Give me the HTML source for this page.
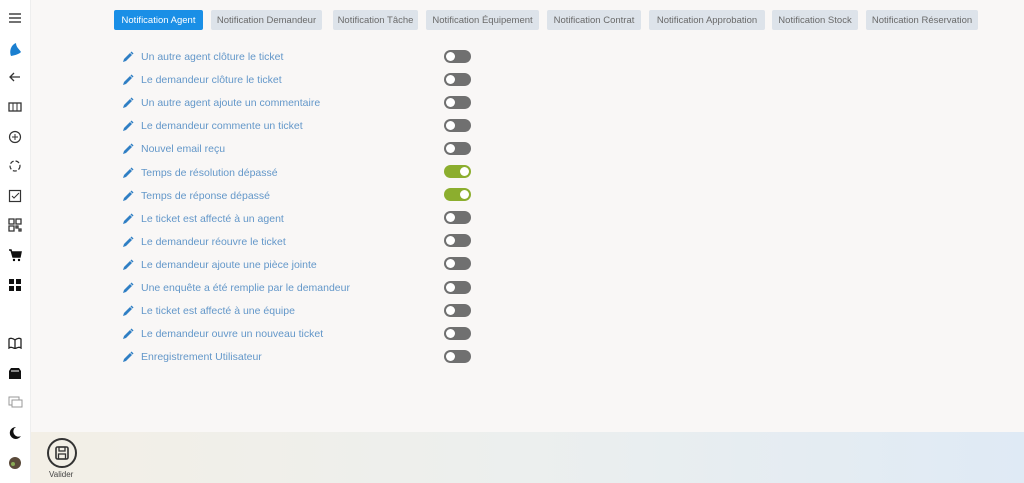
<!DOCTYPE html><html><head><meta charset="utf-8"><style>
*{margin:0;padding:0;box-sizing:border-box}
body{width:1024px;height:483px;overflow:hidden;background:#f9f7f6;font-family:"Liberation Sans",sans-serif;position:relative}
.side{position:absolute;left:0;top:0;width:31px;height:483px;background:#fff;border-right:1px solid #eee}
.side svg{position:absolute;left:8px}
.tab{position:absolute;top:10px;height:20px;background:#dde3ea;color:#6a6a6a;font-size:9.5px;line-height:20px;text-align:center;border-radius:2px;padding-top:1px}
.tab.a{background:#1a8fe6;color:#fff}
.row{position:absolute;left:122px;font-size:10.5px;color:#6397c9;height:14px;line-height:14px}
.row svg{position:absolute;left:0;top:1px}
.row span{position:absolute;left:19px;white-space:nowrap}
.tg{position:absolute;left:444px;width:27px;height:13px;border-radius:7px;background:#707070}
.tg::after{content:"";position:absolute;left:2px;top:2px;width:9px;height:9px;border-radius:50%;background:#fff}
.tg.on{background:#8cae2e}.tg.on::after{left:16px}
.bot{position:absolute;left:31px;top:432px;width:993px;height:51px;background:linear-gradient(90deg,#f3efe6,#ecefee 50%,#dfeaf5)}
</style></head><body>
<div class="side">
<svg style="top:12px" width="14" height="12"><path d="M1 2h12M1 6h12M1 10h12" stroke="#444" stroke-width="1.5"/></svg>
<svg style="top:42px" width="14" height="16"><path d="M3 14C1 9 3 3 8 1c0 4 3 6 5 9-2 2-5 3-10 4z" fill="#1a7fd0"/></svg>
<svg style="top:71px" width="14" height="12"><path d="M12 6H2M6 2L2 6l4 4" stroke="#333" stroke-width="1.3" fill="none"/></svg>
<svg style="top:101px" width="14" height="12"><rect x="1" y="2" width="12" height="8" fill="none" stroke="#333" stroke-width="1.3"/><path d="M5 2v8M9 2v8" stroke="#333"/></svg>
<svg style="top:130px" width="14" height="14"><circle cx="7" cy="7" r="5.5" fill="none" stroke="#333" stroke-width="1.2"/><path d="M7 4v6M4 7h6" stroke="#333"/></svg>
<svg style="top:159px" width="14" height="14"><circle cx="7" cy="7" r="5" fill="none" stroke="#333" stroke-width="1.2" stroke-dasharray="4 2"/></svg>
<svg style="top:189px" width="14" height="14"><rect x="1.5" y="1.5" width="11" height="11" fill="none" stroke="#333" stroke-width="1.2"/><path d="M4 7l2 2 5-5" stroke="#333" fill="none"/></svg>
<svg style="top:218px" width="14" height="14"><path d="M1 1h5v5H1zM8 1h5v5H8zM1 8h5v5H1zM8 8h2v2H8zM11 11h2v2h-2z" fill="none" stroke="#333" stroke-width="1.3"/></svg>
<svg style="top:248px" width="14" height="14"><path d="M1 2h2l2 7h7l1-5H4" stroke="#111" stroke-width="1.5" fill="#111"/><circle cx="6" cy="12" r="1.2"/><circle cx="11" cy="12" r="1.2"/></svg>
<svg style="top:278px" width="14" height="14"><path d="M1 1h5v5H1zM8 1h5v5H8zM1 8h5v5H1zM8 8h5v5H8z" fill="#111"/></svg>
<svg style="top:337px" width="14" height="12"><path d="M7 3C5 1 2 1 1 2v9c1-1 4-1 6 1 2-2 5-2 6-1V2c-1-1-4-1-6 1zM7 3v9" stroke="#222" stroke-width="1.3" fill="none"/></svg>
<svg style="top:367px" width="14" height="13"><path d="M1 4l2-3h8l2 3v8H1z" fill="#111"/><path d="M3 4h8" stroke="#fff"/></svg>
<svg style="top:396px" width="15" height="14"><rect x="1" y="1" width="10" height="8" fill="none" stroke="#999"/><rect x="4" y="4" width="10" height="7" fill="#fff" stroke="#999"/></svg>
<svg style="top:426px" width="14" height="14"><path d="M8 1a6 6 0 1 0 5 9A5 5 0 0 1 8 1z" fill="#111"/></svg>
<svg style="top:456px" width="14" height="14"><circle cx="7" cy="7" r="6" fill="#5a4a3a"/><circle cx="5" cy="8" r="2" fill="#8a5"/></svg>
</div>
<div class="tab a" style="left:114px;width:89px">Notification Agent</div>
<div class="tab" style="left:211px;width:111px">Notification Demandeur</div>
<div class="tab" style="left:333px;width:85px">Notification Tâche</div>
<div class="tab" style="left:426px;width:113px">Notification Équipement</div>
<div class="tab" style="left:547px;width:94px">Notification Contrat</div>
<div class="tab" style="left:649px;width:116px">Notification Approbation</div>
<div class="tab" style="left:772px;width:86px">Notification Stock</div>
<div class="tab" style="left:866px;width:112px">Notification Réservation</div>
<div id="rows"></div>
<div class="bot"></div>
<div style="position:absolute;left:47px;top:438px;width:30px;height:30px;border:2px solid #333;border-radius:50%"><svg width="26" height="26" viewBox="0 0 26 26"><rect x="7" y="7" width="12" height="12" rx="1.5" fill="none" stroke="#333" stroke-width="1.6"/><rect x="10" y="7" width="6" height="4" fill="none" stroke="#333" stroke-width="1.3"/><rect x="9.5" y="14" width="7" height="5" fill="none" stroke="#333" stroke-width="1.3"/></svg></div>
<div style="position:absolute;left:49px;top:470px;font-size:8px;color:#444">Valider</div>
<script>
var t=["Un autre agent clôture le ticket","Le demandeur clôture le ticket","Un autre agent ajoute un commentaire","Le demandeur commente un ticket","Nouvel email reçu","Temps de résolution dépassé","Temps de réponse dépassé","Le ticket est affecté à un agent","Le demandeur réouvre le ticket","Le demandeur ajoute une pièce jointe","Une enquête a été remplie par le demandeur","Le ticket est affecté à une équipe","Le demandeur ouvre un nouveau ticket","Enregistrement Utilisateur"];
var h="";t.forEach(function(s,i){var y=50+i*23.1;h+='<div class="row" style="top:'+y+'px"><svg width="12" height="12" viewBox="0 0 12 12"><path d="M1 11l1-3 6-6 2 2-6 6z" fill="#2f7fc4"/><path d="M9 1l2 2" stroke="#2f7fc4" stroke-width="1.5"/></svg><span>'+s+'</span></div><div class="tg'+(i==5||i==6?' on':'')+'" style="top:'+(y-0.5)+'px"></div>'});
document.getElementById("rows").innerHTML=h;
</script>
</body></html>
